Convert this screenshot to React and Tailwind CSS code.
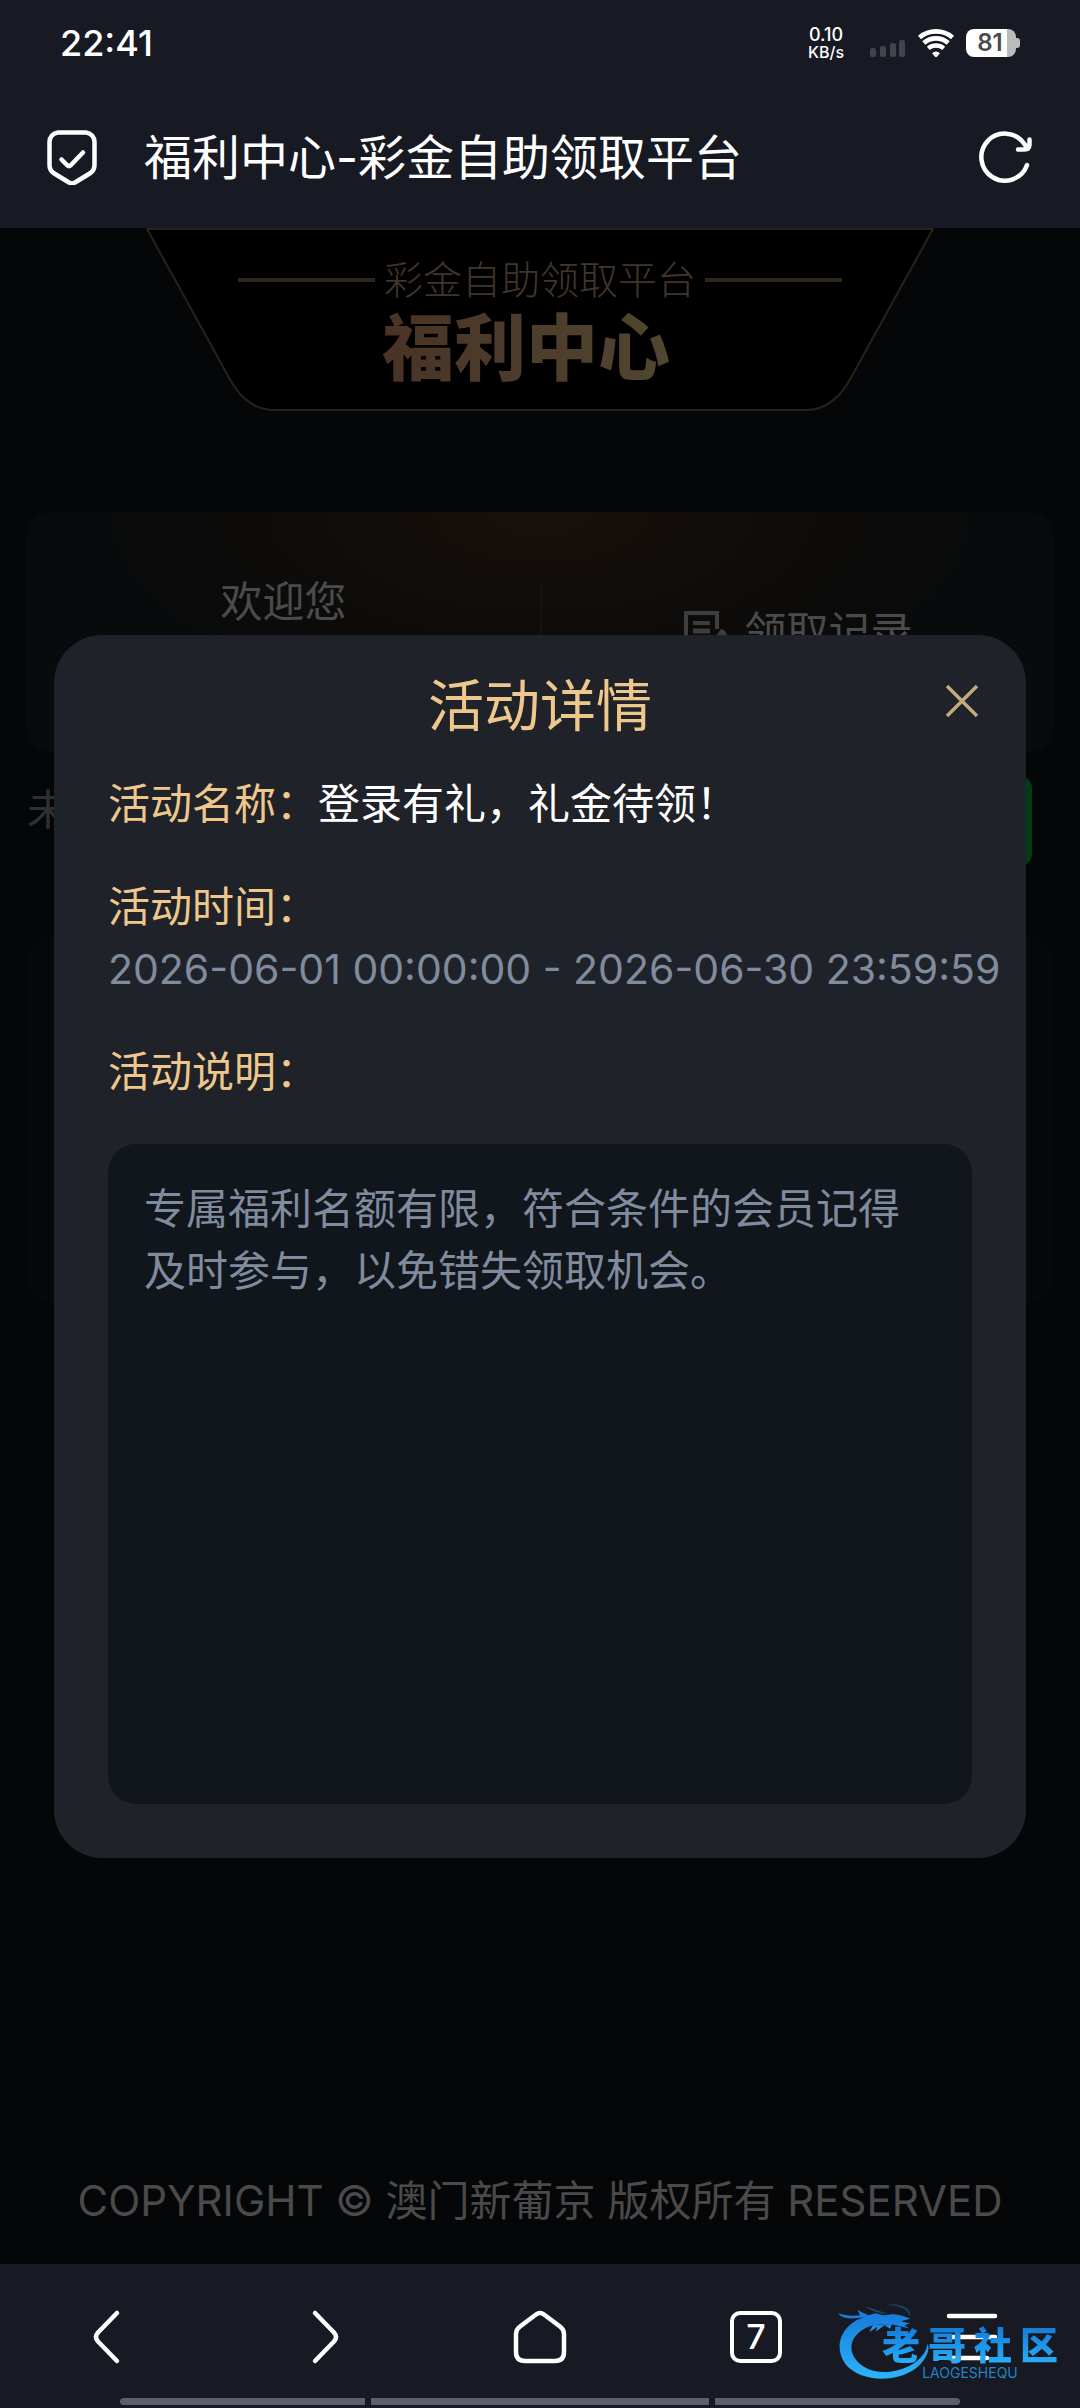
import { useState } from "react";

const EVENT = {
  name: "登录有礼，礼金待领！",
  time: "2026-06-01 00:00:00 - 2026-06-30 23:59:59",
  description: "专属福利名额有限，符合条件的会员记得及时参与，以免错失领取机会。",
};

function StatusBar() {
  return (
    <div className="flex h-[86px] items-center justify-between pl-[60px] pr-[60px] text-white">
      <span className="text-[36px] leading-[40px] font-medium">22:41</span>
      <div className="flex items-center">
        <div className="mr-[26px] flex flex-col items-center font-medium">
          <span className="text-[18px] leading-[18px]">0.10</span>
          <span className="text-[16px] leading-[16px]">KB/s</span>
        </div>
        {/* Signal */}
        <svg className="mr-3 h-[30px] w-[36px]" viewBox="0 0 36 30" fill="#42444b" aria-hidden="true">
          <rect x="0" y="20" width="6" height="9" rx="2" />
          <rect x="10" y="18" width="6" height="11" rx="2" />
          <rect x="20" y="15" width="6" height="14" rx="2" />
          <rect x="29" y="12" width="6" height="17" rx="2" />
        </svg>
        {/* Wifi */}
        <svg className="mr-3 h-[30px] w-[36px]" viewBox="0 0 36 30" fill="none" stroke="#fff" strokeWidth="4.800" aria-hidden="true">
          <path d="M1.500 9.500A25.500 25.500 0 0 1 34.500 9.500" />
          <path d="M5.800 15A18.500 18.500 0 0 1 30.200 15" />
          <path d="M10.300 20.300A12 12 0 0 1 25.700 20.300" strokeWidth="4.300" />
          <path d="M14 25.200Q18 22 22 25.200L19 28.700Q18 29.600 17 28.700Z" fill="#fff" stroke="none" />
        </svg>
        {/* Battery */}
        <div className="flex items-center">
          <div className="flex h-[28px] w-[50px] items-center justify-center rounded-[8px] bg-linear-to-r from-white from-82% to-[#b9bbbd] to-82% pr-[2px] text-[24px] leading-none font-semibold text-[#4a4b4e]">
            81
          </div>
          <div className="h-[10px] w-[4px] rounded-r-[3px] bg-[#b9bbbd]" />
        </div>
      </div>
    </div>
  );
}

function AddressBar() {
  return (
    <div className="flex h-[142px] items-center px-[46px] text-white">
      <svg className="h-[56px] w-[52px] shrink-0" viewBox="0 0 52 56" fill="none" stroke="currentColor" strokeWidth="4.500" strokeLinecap="round" strokeLinejoin="round" aria-hidden="true">
        <path d="M12 3.500H40A9.500 9.500 0 0 1 48.500 13V36Q48.500 41 44.500 44L29 53.500Q26 55 23 53.500L7.500 44Q3.500 41 3.500 36V13A9.500 9.500 0 0 1 12 3.500Z" />
        <path d="M15.500 30.500L21.500 36.500Q23 37.700 24.500 36.500L37 23.500" />
      </svg>
      <h1 className="ml-[46px] flex-1 pt-[2px] text-[48px] leading-[60px] whitespace-nowrap">福利中心-彩金自助领取平台</h1>
      <button type="button" aria-label="刷新">
        <svg className="h-[56px] w-[56px]" viewBox="0 0 56 56" fill="none" stroke="currentColor" strokeWidth="4.500" strokeLinecap="round" strokeLinejoin="round" aria-hidden="true">
          <path d="M49 36A23.500 23.500 0 1 1 46 14.500L50 19.500" />
          <path d="M51.500 10.500V16Q51 20.500 46.500 20.500H40" />
        </svg>
      </button>
    </div>
  );
}

function Banner() {
  return (
    <div className="relative mx-auto h-[183px] w-[788px]">
      <svg className="absolute inset-0 h-full w-full" viewBox="0 0 788 183" fill="#000" stroke="#292219" strokeWidth="2" aria-hidden="true">
        <path d="M1 1H787L707 146Q689 182 660 182H128Q99 182 81 146Z" />
      </svg>
      <div className="relative flex flex-col items-center gap-[4px] pt-[31px]">
        <div className="flex items-center gap-[9px]">
          <span className="h-[4px] w-[137px] bg-[#2d261b]" />
          <p className="text-[39px] leading-[42px] font-light text-[#40362a]">彩金自助领取平台</p>
          <span className="h-[4px] w-[137px] bg-[#2d261b]" />
        </div>
        <p className="mr-[28px] bg-linear-to-r from-[#493325] to-[#504631] bg-clip-text text-[72px] leading-[86px] font-black text-transparent">
          福利中心
        </p>
      </div>
    </div>
  );
}

function PageContent() {
  return (
    <div className="flex flex-1 flex-col bg-[#050608]">
      <Banner />

      {/* Welcome card */}
      <div className="mx-[27px] mt-[101px] grid h-[240px] grid-cols-2 rounded-[24px] bg-[#090a0b] bg-[radial-gradient(ellipse_at_50%_0%,#18100b_0%,#0e0c0a_35%,transparent_60%)] text-[42px] leading-[60px] text-[#4b4b4b]">
        <p className="pt-[60px] text-center">欢迎您</p>
        <div className="my-[70px] flex items-center justify-center gap-[16px] border-l-2 border-[#141414]">
          <svg className="h-[46px] w-[46px]" viewBox="0 0 46 46" fill="none" stroke="#3d3d3d" strokeWidth="4" aria-hidden="true">
            <path d="M26 42H4V4H35V20" />
            <path d="M11 14H28" />
            <path d="M11 22H28M11 30H23" strokeWidth="5" />
            <path d="M28 42L30 32L39 20Q42 20 45 25L35 39Z" fill="#3d3d3d" stroke="none" />
          </svg>
          <span>领取记录</span>
        </div>
      </div>

      {/* Task row */}
      <div className="mx-[27px] mt-6 flex h-[90px] items-center justify-between pr-[21px]">
        <span className="pb-[22px] text-[42px] leading-[60px] text-[#303030]">未</span>
        <div className="h-full w-[210px] rounded-[12px] bg-[#003c18]" />
      </div>

      <div className="mx-[27px] mt-[68px] h-[370px] rounded-[30px] bg-[#06090a]" />

      <p className="mt-auto pb-[33px] text-center text-[42px] leading-[60px] text-[#4a4a4a]">
        COPYRIGHT © 澳门新葡京 版权所有 RESERVED
      </p>
    </div>
  );
}

function EventDialog({ onClose }) {
  return (
    <div className="absolute inset-0 flex items-center px-[54px]">
      <section role="dialog" aria-labelledby="event-title" className="relative w-full rounded-[48px] bg-[#1f2229] px-[54px] pt-9 pb-[54px] text-[42px] leading-[62px]">
        <h2 id="event-title" className="mb-8 text-center text-[56px] leading-[70px] text-[#eec78c]">活动详情</h2>
        <button type="button" aria-label="关闭" onClick={onClose} className="absolute top-[46px] right-[44px] p-[2px]">
          <svg className="h-[36px] w-[36px]" viewBox="0 0 36 36" fill="none" stroke="#c5a87e" strokeWidth="3.500" aria-hidden="true">
            <path d="M3 3L33 33M33 3L3 33" />
          </svg>
        </button>

        <div className="flex flex-col gap-[41px]">
          <p className="text-white">
            <span className="text-[#eec78c]">活动名称：</span>{EVENT.name}
          </p>
          <div>
            <p className="text-[#eec78c]">活动时间：</p>
            <p className="text-[41px] whitespace-nowrap text-[#808b9d]">{EVENT.time}</p>
          </div>
          <p className="text-[#eec78c]">活动说明：</p>
          <div className="h-[660px] rounded-[28px] bg-[#11151c] px-9 py-[34px] text-[#808b9d]">{EVENT.description}</div>
        </div>
      </section>
    </div>
  );
}

function Watermark() {
  return (
    <div className="pointer-events-none absolute top-[38px] right-[18px] h-[82px] w-[224px]">
      <svg className="absolute inset-0 h-full w-full" viewBox="114 126 672 246" aria-hidden="true">
        <defs>
          <linearGradient id="dragon" x1="0" y1="0" x2="0" y2="1">
            <stop offset="0" stopColor="#1678d8" />
            <stop offset="1" stopColor="#2bb4fb" />
          </linearGradient>
        </defs>
        <g fill="url(#dragon)">
          <path d="M192 172C126 192 98 260 136 312C190 380 352 370 384 275C384 270 388 262 382 252C376 316 258 362 192 320C136 286 142 222 212 198C255 186 285 194 327 205L314 196L330 190L302 184L331 176C310 168 282 160 268 164L250 166L226 160L206 166L172 150L180 166C158 168 136 168 114 160C128 180 160 176 192 172Z" />
          <path d="M200 194L222 190L208 216L232 200L228 214L254 196L270 206L276 192Z" />
          <path d="M262 134C300 128 336 145 330 170C326 150 306 138 262 134ZM196 140C218 144 244 154 262 162C238 160 214 152 196 140Z" opacity=".35" />
        </g>
      </svg>
      <div className="relative flex flex-col items-center pt-[23px] pl-[40px]">
        <span className="flex gap-[8px] bg-linear-to-b from-[#1478d6] to-[#2bb0fa] bg-clip-text text-[38px] leading-[40px] font-black text-transparent">
          <span>老</span><span>哥</span><span>社</span><span>区</span>
        </span>
        <span className="text-[14px] leading-[16px] text-[#2283c6]">LAOGESHEQU</span>
      </div>
    </div>
  );
}

function NavBar() {
  return (
    <nav className="relative flex h-[144px] flex-col bg-[#171a23] text-white">
      <div className="grid flex-1 grid-cols-5 place-items-center pt-[12px]">
        <button type="button" aria-label="后退">
          <svg className="h-[56px] w-[56px]" viewBox="0 0 56 56" fill="none" stroke="currentColor" strokeWidth="4.500" strokeLinecap="round" strokeLinejoin="round">
            <path d="M37 4L18 23.500Q14 28 18 32.500L37 52" />
          </svg>
        </button>
        <button type="button" aria-label="前进">
          <svg className="h-[56px] w-[56px]" viewBox="0 0 56 56" fill="none" stroke="currentColor" strokeWidth="4.500" strokeLinecap="round" strokeLinejoin="round">
            <path d="M19 4L38 23.500Q42 28 38 32.500L19 52" />
          </svg>
        </button>
        <button type="button" aria-label="主页">
          <svg className="h-[56px] w-[56px]" viewBox="0 0 56 56" fill="none" stroke="currentColor" strokeWidth="4.500" strokeLinejoin="round">
            <path d="M24 5.500Q28 2.500 32 5.500L48 17.500Q52 20.500 52 25V43Q52 52 43 52H13Q4 52 4 43V25Q4 20.500 8 17.500Z" />
          </svg>
        </button>
        <button type="button" aria-label="标签页" className="flex h-[52px] w-[52px] items-center justify-center rounded-[10px] border-[4px] border-white text-[34px] leading-none font-medium">
          7
        </button>
        <button type="button" aria-label="菜单">
          <svg className="h-[56px] w-[56px]" viewBox="0 0 56 56" fill="none" stroke="currentColor" strokeWidth="4.500" strokeLinecap="round">
            <path d="M5 7H51M5 28H51M5 49H43" />
          </svg>
        </button>
      </div>
      {/* Gesture hints */}
      <div className="mx-[120px] mb-[3px] flex h-[7px] gap-[6px]">
        <span className="flex-[245] rounded-l-full bg-[#5f6067]" />
        <span className="flex-[338] bg-[#5f6067]" />
        <span className="flex-[245] rounded-r-full bg-[#5f6067]" />
      </div>
      <Watermark />
    </nav>
  );
}

export default function App() {
  const [open, setOpen] = useState(true);

  return (
    <div className="flex min-h-screen flex-col bg-[#050608] font-[Inter,'Noto_Sans_CJK_SC',sans-serif]">
      <header className="bg-[#171a23]">
        <StatusBar />
        <AddressBar />
      </header>
      <main className="relative flex flex-1 flex-col">
        <PageContent />
        {open && <EventDialog onClose={() => setOpen(false)} />}
      </main>
      <NavBar />
    </div>
  );
}
